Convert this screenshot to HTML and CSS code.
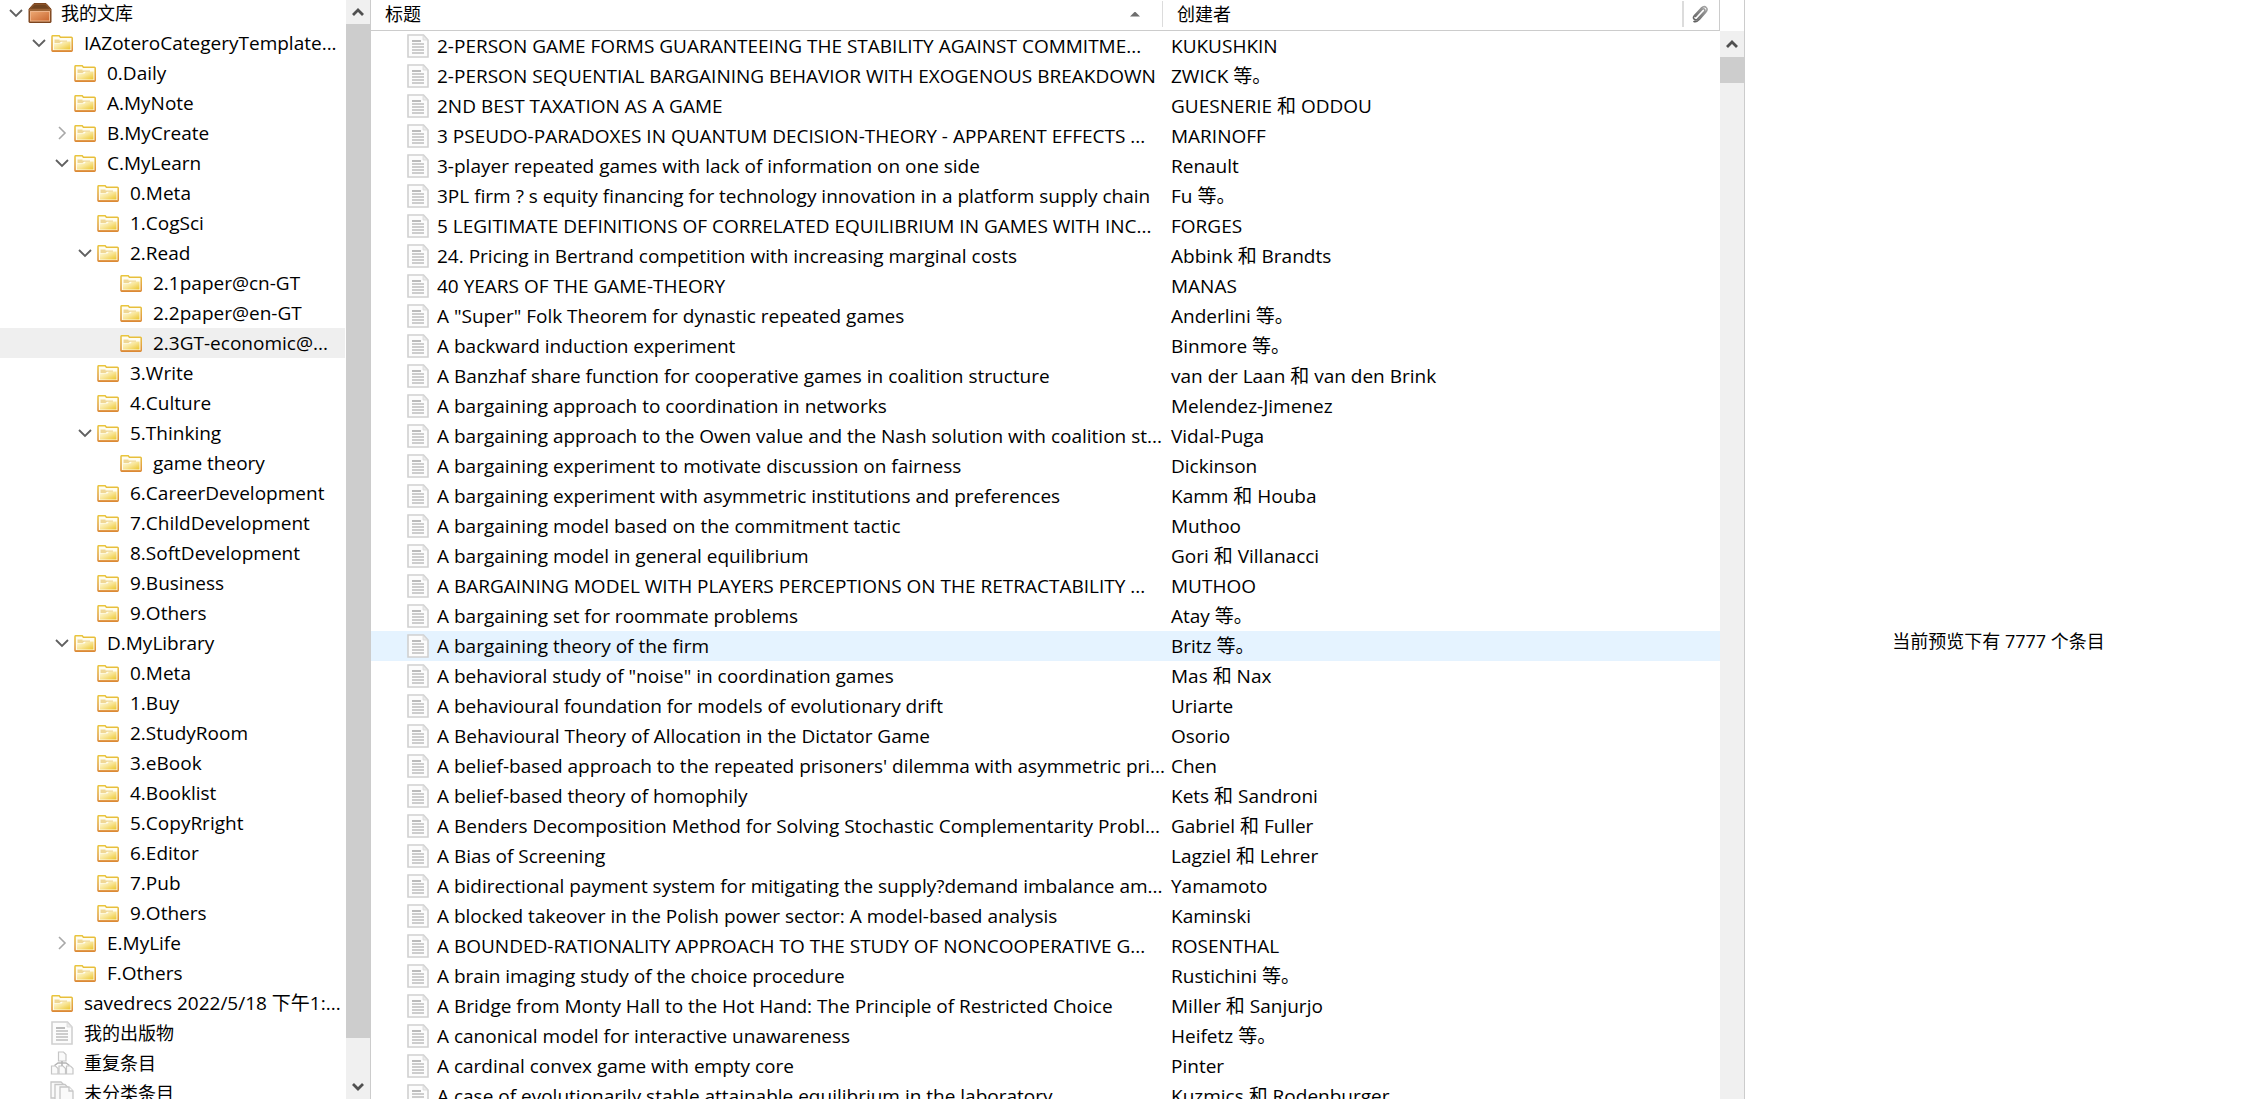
FILE: index.html
```html
<!DOCTYPE html>
<html lang="zh-CN">
<head>
<meta charset="utf-8">
<meta name="viewport" content="width=device-width, initial-scale=1">
<title>我的文库</title>
<link rel="stylesheet" href="styles.css">
</head>
<body>
<svg class="defs" width="0" height="0" aria-hidden="true">
  <defs>
    <linearGradient id="gFolder" x1="0" y1="0" x2="1" y2="1"><stop offset="0" stop-color="#fffbe6"/><stop offset=".5" stop-color="#f8e596"/><stop offset="1" stop-color="#ecc62e"/></linearGradient>
    <linearGradient id="gEdge" x1="0" y1="0" x2="0" y2="1"><stop offset="0" stop-color="#e9c53c"/><stop offset="1" stop-color="#dc8a35"/></linearGradient>
    <linearGradient id="gBox" x1="0" y1="0" x2="1" y2="1"><stop offset="0" stop-color="#eda873"/><stop offset="1" stop-color="#c9662f"/></linearGradient>
    <linearGradient id="gClip" x1="1" y1="0" x2="0" y2="1"><stop offset="0" stop-color="#a8a8a8"/><stop offset="1" stop-color="#5c5c5c"/></linearGradient>
    <symbol id="folder" viewBox="0 0 22 17">
      <path d="M1 15.5V1.5q0-.8.8-.8h6.400l1.200 1.500h11q.8 0 .8.8v12.500q0 .7-.8.7H1.800q-.8 0-.8-.7z" fill="#fffdf0" stroke="url(#gEdge)" stroke-width="1.500"/>
      <path d="M3 14.500V8.500h7.500l1.500-2h7.500v8z" fill="url(#gFolder)"/>
      <path d="M3.500 4.500h5v1h7.500v1.200H10L8.500 8h-5z" fill="#efd795"/>
      <path d="M1.500 16h19" stroke="#dc8a35" stroke-width="1.500"/>
    </symbol>
    <symbol id="box" viewBox="0 0 24 20">
      <path d="M1 19V6l5-5.500h12L23 6v13q0 .5-.5.5h-21q-.5 0-.5-.5z" fill="#8a5228" stroke="#7c451f" stroke-width="1"/>
      <path d="M3 5.500L6.700 2h10.600L21 5.500z" fill="#704420"/>
      <path d="M1 7h22" stroke="#a8703e" stroke-width="1.200"/>
      <rect x="2.500" y="8.500" width="19" height="9.500" fill="url(#gBox)" stroke="#edb48a" stroke-width="1"/>
    </symbol>
    <symbol id="doc" viewBox="0 0 22 24">
      <path d="M1 1h15.500L21 6v17H1z" fill="#fcfcfc" stroke="#d0d0d0" stroke-width="1.600"/>
      <path d="M16 1.500V6h4.500z" fill="#ececec" stroke="#d8d8d8" stroke-width=".8"/>
      <path d="M5 7h9" stroke="#a6a6a6" stroke-width="1.500"/>
      <path d="M5 10h12M5 13h12M5 16h12M5 19h12" stroke="#bdbdbd" stroke-width="1.400"/>
    </symbol>
    <symbol id="dup" viewBox="0 0 24 24">
      <g fill="#fafafa" stroke="#c6c6c6" stroke-width="1.200"><path d="M8.500 1h5l2.500 2.500V10H8.500z"/><path d="M1.500 15h4l2.500 2.500V23H1.500z"/><path d="M9 15h4l2.500 2.500V23H9z"/><path d="M16.500 15h4l2.500 2.500V23h-6.500z"/></g>
      <path d="M12 10v5M4.500 14.500l3.500-2.500h8l3.500 2.500" fill="none" stroke="#b4b4b4" stroke-width="1.500"/>
    </symbol>
    <symbol id="unfiled" viewBox="0 0 24 24">
      <g fill="#fafafa" stroke="#c6c6c6" stroke-width="1.300"><path d="M1 1h10l3 3v13H1z"/><path d="M5 3.500h10l3 3V20H5z"/><path d="M10 6h9l4 4v13H10z"/><path d="M19 6v4h4"/></g>
    </symbol>
    <symbol id="down" viewBox="0 0 14 14"><path d="M1 4l6 6 6-6" fill="none" stroke="#606060" stroke-width="1.800"/></symbol>
    <symbol id="right" viewBox="0 0 14 14"><path d="M4 1l6 6-6 6" fill="none" stroke="#a8a8a8" stroke-width="1.600"/></symbol>
    <symbol id="up" viewBox="0 0 12 10"><path d="M1 8l5-5 5 5" fill="none" stroke="#505050" stroke-width="2.800"/></symbol>
    <symbol id="clip" viewBox="0 0 18 18"><path d="M4.500 11.500l6.500-7q1.500-1.300 2.500-.3t-.3 2.500l-6.700 7.300q-1.800 1.600-3.300.2t.1-3.400l6.900-7.600q3-2.600 5-.7t-.5 4.800L8.500 14.200q-3 3.200-5.500 2.300" fill="none" stroke="url(#gClip)" stroke-width="1.600" stroke-linecap="round"/></symbol>
  </defs>
</svg>
<div class="app">
  <nav class="library" aria-label="文库">
    <ul class="tree">
      <li class="l0 zh"><button class="tw" aria-label="折叠"><svg><use href="#down"/></svg></button><svg class="box"><use href="#box"/></svg><span>我的文库</span></li>
      <li class="l1"><button class="tw" aria-label="折叠"><svg><use href="#down"/></svg></button><svg><use href="#folder"/></svg><span>IAZoteroCategeryTemplate...</span></li>
      <li class="l2"><svg><use href="#folder"/></svg><span>0.Daily</span></li>
      <li class="l2"><svg><use href="#folder"/></svg><span>A.MyNote</span></li>
      <li class="l2"><button class="tw" aria-label="展开"><svg><use href="#right"/></svg></button><svg><use href="#folder"/></svg><span>B.MyCreate</span></li>
      <li class="l2"><button class="tw" aria-label="折叠"><svg><use href="#down"/></svg></button><svg><use href="#folder"/></svg><span>C.MyLearn</span></li>
      <li class="l3"><svg><use href="#folder"/></svg><span>0.Meta</span></li>
      <li class="l3"><svg><use href="#folder"/></svg><span>1.CogSci</span></li>
      <li class="l3"><button class="tw" aria-label="折叠"><svg><use href="#down"/></svg></button><svg><use href="#folder"/></svg><span>2.Read</span></li>
      <li class="l4"><svg><use href="#folder"/></svg><span>2.1paper@cn-GT</span></li>
      <li class="l4"><svg><use href="#folder"/></svg><span>2.2paper@en-GT</span></li>
      <li class="l4 selected"><svg><use href="#folder"/></svg><span>2.3GT-economic@...</span></li>
      <li class="l3"><svg><use href="#folder"/></svg><span>3.Write</span></li>
      <li class="l3"><svg><use href="#folder"/></svg><span>4.Culture</span></li>
      <li class="l3"><button class="tw" aria-label="折叠"><svg><use href="#down"/></svg></button><svg><use href="#folder"/></svg><span>5.Thinking</span></li>
      <li class="l4"><svg><use href="#folder"/></svg><span>game theory</span></li>
      <li class="l3"><svg><use href="#folder"/></svg><span>6.CareerDevelopment</span></li>
      <li class="l3"><svg><use href="#folder"/></svg><span>7.ChildDevelopment</span></li>
      <li class="l3"><svg><use href="#folder"/></svg><span>8.SoftDevelopment</span></li>
      <li class="l3"><svg><use href="#folder"/></svg><span>9.Business</span></li>
      <li class="l3"><svg><use href="#folder"/></svg><span>9.Others</span></li>
      <li class="l2"><button class="tw" aria-label="折叠"><svg><use href="#down"/></svg></button><svg><use href="#folder"/></svg><span>D.MyLibrary</span></li>
      <li class="l3"><svg><use href="#folder"/></svg><span>0.Meta</span></li>
      <li class="l3"><svg><use href="#folder"/></svg><span>1.Buy</span></li>
      <li class="l3"><svg><use href="#folder"/></svg><span>2.StudyRoom</span></li>
      <li class="l3"><svg><use href="#folder"/></svg><span>3.eBook</span></li>
      <li class="l3"><svg><use href="#folder"/></svg><span>4.Booklist</span></li>
      <li class="l3"><svg><use href="#folder"/></svg><span>5.CopyRright</span></li>
      <li class="l3"><svg><use href="#folder"/></svg><span>6.Editor</span></li>
      <li class="l3"><svg><use href="#folder"/></svg><span>7.Pub</span></li>
      <li class="l3"><svg><use href="#folder"/></svg><span>9.Others</span></li>
      <li class="l2"><button class="tw" aria-label="展开"><svg><use href="#right"/></svg></button><svg><use href="#folder"/></svg><span>E.MyLife</span></li>
      <li class="l2"><svg><use href="#folder"/></svg><span>F.Others</span></li>
      <li class="l1"><svg><use href="#folder"/></svg><span>savedrecs 2022/5/18 下午1:...</span></li>
      <li class="l1 zh"><svg class="page"><use href="#doc"/></svg><span>我的出版物</span></li>
      <li class="l1 zh"><svg class="pages"><use href="#dup"/></svg><span>重复条目</span></li>
      <li class="l1 zh"><svg class="pages"><use href="#unfiled"/></svg><span>未分类条目</span></li>
    </ul>
    <div class="scroll">
      <button aria-label="向上滚动"><svg><use href="#up"/></svg></button>
      <div class="track"><div class="thumb"></div></div>
      <button class="end" aria-label="向下滚动"><svg><use href="#up"/></svg></button>
    </div>
  </nav>
  <main class="items">
    <table>
      <colgroup><col><col class="c-creator"><col class="c-clip"></colgroup>
      <thead><tr>
        <th><button class="sorted">标题<i class="asc"></i></button></th>
        <th><button class="wide">创建者</button></th>
        <th><button class="attach" aria-label="附件"><svg><use href="#clip"/></svg></button></th>
      </tr></thead>
      <tbody>
        <tr><td><svg><use href="#doc"/></svg>2-PERSON GAME FORMS GUARANTEEING THE STABILITY AGAINST COMMITME...</td><td>KUKUSHKIN</td><td></td></tr>
        <tr><td><svg><use href="#doc"/></svg>2-PERSON SEQUENTIAL BARGAINING BEHAVIOR WITH EXOGENOUS BREAKDOWN</td><td>ZWICK 等。</td><td></td></tr>
        <tr><td><svg><use href="#doc"/></svg>2ND BEST TAXATION AS A GAME</td><td>GUESNERIE 和 ODDOU</td><td></td></tr>
        <tr><td><svg><use href="#doc"/></svg>3 PSEUDO-PARADOXES IN QUANTUM DECISION-THEORY - APPARENT EFFECTS ...</td><td>MARINOFF</td><td></td></tr>
        <tr><td><svg><use href="#doc"/></svg>3-player repeated games with lack of information on one side</td><td>Renault</td><td></td></tr>
        <tr><td><svg><use href="#doc"/></svg>3PL firm ? s equity financing for technology innovation in a platform supply chain</td><td>Fu 等。</td><td></td></tr>
        <tr><td><svg><use href="#doc"/></svg>5 LEGITIMATE DEFINITIONS OF CORRELATED EQUILIBRIUM IN GAMES WITH INC...</td><td>FORGES</td><td></td></tr>
        <tr><td><svg><use href="#doc"/></svg>24. Pricing in Bertrand competition with increasing marginal costs</td><td>Abbink 和 Brandts</td><td></td></tr>
        <tr><td><svg><use href="#doc"/></svg>40 YEARS OF THE GAME-THEORY</td><td>MANAS</td><td></td></tr>
        <tr><td><svg><use href="#doc"/></svg>A "Super" Folk Theorem for dynastic repeated games</td><td>Anderlini 等。</td><td></td></tr>
        <tr><td><svg><use href="#doc"/></svg>A backward induction experiment</td><td>Binmore 等。</td><td></td></tr>
        <tr><td><svg><use href="#doc"/></svg>A Banzhaf share function for cooperative games in coalition structure</td><td>van der Laan 和 van den Brink</td><td></td></tr>
        <tr><td><svg><use href="#doc"/></svg>A bargaining approach to coordination in networks</td><td>Melendez-Jimenez</td><td></td></tr>
        <tr><td><svg><use href="#doc"/></svg>A bargaining approach to the Owen value and the Nash solution with coalition st...</td><td>Vidal-Puga</td><td></td></tr>
        <tr><td><svg><use href="#doc"/></svg>A bargaining experiment to motivate discussion on fairness</td><td>Dickinson</td><td></td></tr>
        <tr><td><svg><use href="#doc"/></svg>A bargaining experiment with asymmetric institutions and preferences</td><td>Kamm 和 Houba</td><td></td></tr>
        <tr><td><svg><use href="#doc"/></svg>A bargaining model based on the commitment tactic</td><td>Muthoo</td><td></td></tr>
        <tr><td><svg><use href="#doc"/></svg>A bargaining model in general equilibrium</td><td>Gori 和 Villanacci</td><td></td></tr>
        <tr><td><svg><use href="#doc"/></svg>A BARGAINING MODEL WITH PLAYERS PERCEPTIONS ON THE RETRACTABILITY ...</td><td>MUTHOO</td><td></td></tr>
        <tr><td><svg><use href="#doc"/></svg>A bargaining set for roommate problems</td><td>Atay 等。</td><td></td></tr>
        <tr class="hover"><td><svg><use href="#doc"/></svg>A bargaining theory of the firm</td><td>Britz 等。</td><td></td></tr>
        <tr><td><svg><use href="#doc"/></svg>A behavioral study of "noise" in coordination games</td><td>Mas 和 Nax</td><td></td></tr>
        <tr><td><svg><use href="#doc"/></svg>A behavioural foundation for models of evolutionary drift</td><td>Uriarte</td><td></td></tr>
        <tr><td><svg><use href="#doc"/></svg>A Behavioural Theory of Allocation in the Dictator Game</td><td>Osorio</td><td></td></tr>
        <tr><td><svg><use href="#doc"/></svg>A belief-based approach to the repeated prisoners' dilemma with asymmetric pri...</td><td>Chen</td><td></td></tr>
        <tr><td><svg><use href="#doc"/></svg>A belief-based theory of homophily</td><td>Kets 和 Sandroni</td><td></td></tr>
        <tr><td><svg><use href="#doc"/></svg>A Benders Decomposition Method for Solving Stochastic Complementarity Probl...</td><td>Gabriel 和 Fuller</td><td></td></tr>
        <tr><td><svg><use href="#doc"/></svg>A Bias of Screening</td><td>Lagziel 和 Lehrer</td><td></td></tr>
        <tr><td><svg><use href="#doc"/></svg>A bidirectional payment system for mitigating the supply?demand imbalance am...</td><td>Yamamoto</td><td></td></tr>
        <tr><td><svg><use href="#doc"/></svg>A blocked takeover in the Polish power sector: A model-based analysis</td><td>Kaminski</td><td></td></tr>
        <tr><td><svg><use href="#doc"/></svg>A BOUNDED-RATIONALITY APPROACH TO THE STUDY OF NONCOOPERATIVE G...</td><td>ROSENTHAL</td><td></td></tr>
        <tr><td><svg><use href="#doc"/></svg>A brain imaging study of the choice procedure</td><td>Rustichini 等。</td><td></td></tr>
        <tr><td><svg><use href="#doc"/></svg>A Bridge from Monty Hall to the Hot Hand: The Principle of Restricted Choice</td><td>Miller 和 Sanjurjo</td><td></td></tr>
        <tr><td><svg><use href="#doc"/></svg>A canonical model for interactive unawareness</td><td>Heifetz 等。</td><td></td></tr>
        <tr><td><svg><use href="#doc"/></svg>A cardinal convex game with empty core</td><td>Pinter</td><td></td></tr>
        <tr><td><svg><use href="#doc"/></svg>A case of evolutionarily stable attainable equilibrium in the laboratory</td><td>Kuzmics 和 Rodenburger</td><td></td></tr>
      </tbody>
    </table>
    <div class="scroll list">
      <button aria-label="向上滚动"><svg><use href="#up"/></svg></button>
      <div class="track"><div class="thumb"></div></div>
    </div>
  </main>
  <aside class="detail"><p>当前预览下有 7777 个条目</p></aside>
</div>
</body>
</html>
```
FILE: styles.css
```css
* { box-sizing: border-box; }

body {
  margin: 0;
  background: #fff;
  color: #000;
  font: 19px/30px "Open Sans", "Noto Sans CJK SC", sans-serif;
  overflow: hidden;
}

.defs { position: absolute; }

button {
  margin: 0;
  padding: 0;
  border: 0;
  background: none;
  color: inherit;
  font: inherit;
}

svg { display: block; flex: none; }

.app {
  display: grid;
  grid-template-columns: 371px minmax(0, 1fr) 507px;
  height: 100vh;
}

/* Collection tree */
.library {
  display: flex;
  min-height: 0;
  border-right: 1px solid #ccc;
}

.tree {
  flex: 1;
  min-width: 0;
  margin: -2px 1px 0 0;
  padding: 0;
  list-style: none;
  overflow: hidden;
}

.tree li {
  display: flex;
  align-items: center;
  height: 30px;
  white-space: nowrap;
}

.tree li > svg { width: 22px; height: 17px; margin-right: 11px; }
.tree li > .box { width: 24px; height: 20px; margin-right: 9px; }
.tree li > .page { height: 24px; }
.tree li > .pages { width: 24px; height: 24px; margin: 0 10px 0 -1px; }

.tree .l0 { padding-left: 28px; }
.tree .l1 { padding-left: 51px; }
.tree .l2 { padding-left: 74px; }
.tree .l3 { padding-left: 97px; }
.tree .l4 { padding-left: 120px; }

.tw { width: 14px; margin: 0 5px 0 -19px; }
.tw svg { width: 14px; height: 14px; }

.zh { font-size: 18px; }
.selected { background: #efefef; }

/* Scroll bars */
.scroll {
  display: flex;
  flex: none;
  flex-direction: column;
  width: 24px;
  background: #f0f0f0;
}

.scroll button {
  display: flex;
  align-items: center;
  justify-content: center;
  height: 24px;
}

.scroll button svg { width: 12px; height: 10px; }
.scroll .end svg { transform: rotate(180deg); }
.track { flex: 1; }
.thumb { height: 96.5%; background: #cdcdcd; }

.list { margin-top: 31px; }
.list button { height: 26px; }
.list .thumb { height: 26px; }

/* Item list */
.items {
  display: flex;
  min-width: 0;
  min-height: 0;
  border-right: 1px solid #ccc;
  overflow: hidden;
}

table {
  flex: 1;
  width: 100%;
  min-width: 0;
  align-self: flex-start;
  table-layout: fixed;
  border-collapse: separate;
  border-spacing: 0;
}

.c-creator { width: 521px; }
.c-clip { width: 36px; }

th, td {
  padding: 0;
  font-weight: 400;
  text-align: left;
  white-space: nowrap;
}

th {
  height: 31px;
  border-bottom: 1px solid #ccc;
  font-size: 18px;
  line-height: 26px;
  vertical-align: top;
}

th:last-child { border-right: 1px solid #ccc; }

th button {
  display: flex;
  align-items: center;
  width: 100%;
  height: 26px;
  margin-top: 1px;
  padding-left: 14px;
  border-right: 1px solid #dcdcdc;
}

th .wide { border-right-width: 2px; }
th .attach { padding-left: 7px; border: 0; }
th svg { width: 18px; height: 20px; }

.asc {
  width: 10px;
  height: 5px;
  margin: 0 22px 0 auto;
  background: #6e6e6e;
  clip-path: polygon(50% 0, 100% 100%, 0 100%);
}

td { height: 30px; padding-left: 8px; }
td:first-child { padding-left: 36px; }
td svg { float: left; width: 22px; height: 24px; margin: 3px 8px 3px 0; }
.hover { background: #e5f3ff; }

/* Detail pane */
.detail {
  padding-top: 57vh;
  font-size: 18px;
  text-align: center;
}

.detail p { margin: 0; }
```
